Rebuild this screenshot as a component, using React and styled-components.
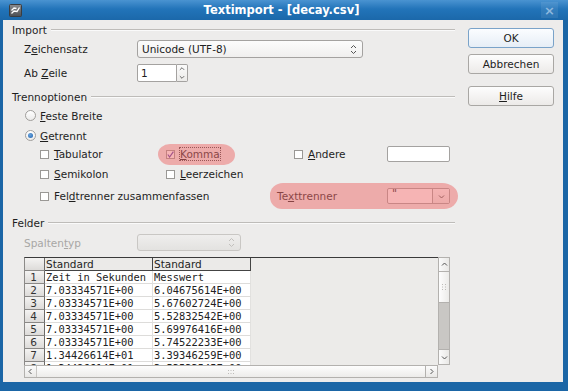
import React from 'react'
import styled, { createGlobalStyle } from 'styled-components'

const GlobalStyle = createGlobalStyle`
  html, body { margin: 0; padding: 0; background: #1b66a6; }
  body {
    font-family: "DejaVu Sans", Verdana, sans-serif;
    font-size: 10px;
    color: #1e1e1e;
  }
`

const Window = styled.div`
  width: 568px;
  height: 391px;
  display: flex;
  flex-direction: column;
  background: #1b66a6;
  overflow: hidden;
  position: relative;
`

const TitleBar = styled.div`
  height: 20px;
  flex: none;
  display: flex;
  align-items: center;
  padding: 0 10px 0 9px;
  background: linear-gradient(#4a93d1, #2274b9 45%, #1b68aa);
`

const Title = styled.div`
  flex: 1;
  text-align: center;
  color: #fff;
  font-weight: bold;
  font-size: 11.5px;
`

const CloseBox = styled.div`
  width: 17px;
  height: 16px;
  display: flex;
  align-items: center;
  justify-content: center;
  background: rgba(255, 255, 255, 0.08);
  color: #8db8de;
  font-size: 13px;
  font-weight: bold;
`

const Client = styled.div`
  flex: 1;
  margin: 0 5px 9px 3px;
  background: #edeceb;
  display: flex;
  padding: 3px 0 0 9px;
`

const Main = styled.div`
  width: 443px;
  display: flex;
  flex-direction: column;
  position: relative;
`

const ButtonColumn = styled.div`
  margin: 5px 0 0 13px;
  width: 86px;
  display: flex;
  flex-direction: column;
`

const Button = styled.div`
  height: 18px;
  margin-top: ${p => p.$mt || 0}px;
  border: 1px solid ${p => (p.$default ? '#7aa3c9' : '#a9a7a4')};
  border-radius: 3px;
  background: ${p => (p.$default ? 'linear-gradient(#fbfdff, #e6eef6)' : 'linear-gradient(#fdfdfd, #eceae8)')};
  display: flex;
  align-items: center;
  justify-content: center;
  font-size: 10.5px;
`

const SectionHead = styled.div`
  height: 13px;
  margin-top: ${p => p.$mt || 0}px;
  display: flex;
  align-items: center;
  gap: 4px;
  font-size: 10.5px;

  &::after {
    content: '';
    flex: 1;
    height: 1px;
    background: #bebcb9;
    box-shadow: 0 1px 0 #fafafa;
  }
`

const Row = styled.div`
  height: ${p => p.$h || 13}px;
  margin-top: ${p => p.$mt || 0}px;
  padding-left: ${p => p.$indent || 0}px;
  display: flex;
  align-items: center;
  font-size: 10.5px;
`

const Cell = styled.div`
  width: ${p => p.$w}px;
  flex: none;
  white-space: nowrap;
  color: ${p => (p.$disabled ? '#a8a7a5' : 'inherit')};
`

const CheckCell = styled.div`
  width: ${p => p.$w}px;
  flex: none;
  display: flex;
  align-items: center;
  white-space: nowrap;
`

const U = styled.span`
  text-decoration: underline;
  text-underline-offset: 1px;
`

const SelectBox = styled.div`
  width: ${p => p.$w}px;
  height: ${p => p.$h || 18}px;
  box-sizing: border-box;
  border: 1px solid ${p => (p.$disabled ? '#c9c7c4' : '#a4a2a0')};
  border-radius: 3px;
  background: ${p => (p.$disabled ? 'linear-gradient(#efeeed, #e3e2e0)' : 'linear-gradient(#fcfcfc, #f0efee)')};
  display: flex;
  align-items: center;
  justify-content: space-between;
  padding: 0 5px 0 4px;
  color: ${p => (p.$disabled ? '#b8b6b3' : '#222')};
`

const SpinWrap = styled.div`
  display: flex;
  height: 18px;
`

const TextInput = styled.div`
  width: ${p => p.$w}px;
  height: ${p => p.$h || 18}px;
  box-sizing: border-box;
  border: 1px solid #a4a2a0;
  border-radius: ${p => p.$radius || '2px'};
  background: #fff;
  display: flex;
  align-items: center;
  padding-left: 3px;
`

const SpinButtons = styled.div`
  width: 11px;
  box-sizing: border-box;
  border: 1px solid #a4a2a0;
  border-left: none;
  border-radius: 0 2px 2px 0;
  background: linear-gradient(#fbfbfb, #ecebe9);
  display: flex;
  flex-direction: column;
  align-items: center;
  justify-content: space-around;
`

const Radio = styled.span`
  width: 11px;
  height: 11px;
  box-sizing: border-box;
  border-radius: 50%;
  border: 1px solid #a09e9b;
  background: linear-gradient(#ffffff, #ecebea);
  margin-right: 4px;
  display: flex;
  align-items: center;
  justify-content: center;

  &::after {
    content: '';
    display: ${p => (p.$on ? 'block' : 'none')};
    width: 5px;
    height: 5px;
    border-radius: 50%;
    background: radial-gradient(circle at 40% 35%, #6ba4dc, #1f63b0);
  }
`

const Check = styled.span`
  width: 9px;
  height: 9px;
  box-sizing: border-box;
  border: 1px solid #9a9895;
  background: #fff;
  margin-right: 5px;
  display: flex;
  align-items: center;
  justify-content: center;
  flex: none;
`

const FocusText = styled.span`
  outline: 1px dotted #444;
  outline-offset: 0;
`

const Highlight = styled.div`
  position: absolute;
  left: ${p => p.$x}px;
  top: ${p => p.$y}px;
  width: ${p => p.$w}px;
  height: ${p => p.$h}px;
  border-radius: ${p => p.$r};
  background: rgba(238, 105, 105, 0.5);
  pointer-events: none;
`

const ComboWrap = styled.div`
  width: 63px;
  height: 16px;
  box-sizing: border-box;
  border: 1px solid #a4a2a0;
  border-radius: 2px;
  background: #fff;
  display: flex;
`

const ComboText = styled.div`
  flex: 1;
  padding: 0 4px;
  line-height: 9px;
  font-size: 11px;
`

const ComboButton = styled.div`
  width: 16px;
  border-left: 1px solid #a4a2a0;
  background: linear-gradient(#fbfbfb, #ecebe9);
  display: flex;
  align-items: center;
  justify-content: center;
`

/* ---------- preview table ---------- */

const Grid = styled.div`
  margin: 6px 0 0 12px;
  width: 426px;
  height: 121px;
  display: grid;
  grid-template-columns: 414px 12px;
  grid-template-rows: 108px 13px;
  background: #ecebe9;
`

const DataArea = styled.div`
  border-top: 1px solid #3a3a3a;
  border-left: 1px solid #8c8a88;
  overflow: hidden;
  background: #ecebe9;
`

const TRow = styled.div`
  display: flex;
  height: 13px;
`

const RowHead = styled.div`
  width: 20px;
  flex: none;
  box-sizing: border-box;
  border-right: 1px solid #6c6a68;
  border-bottom: 1px solid #8a8886;
  background: linear-gradient(#f4f3f2, #dddbd9);
  text-align: center;
  padding-right: 2px;
  font-size: 10.5px;
  line-height: 12px;
  color: #333;
`

const TCell = styled.div`
  width: ${p => p.$w}px;
  flex: none;
  box-sizing: border-box;
  padding-left: 1px;
  white-space: nowrap;
  overflow: hidden;
  line-height: 12px;
  ${p =>
    p.$head
      ? `
    background: #ebeae8;
    border-right: 1px solid #444;
    border-bottom: 1px solid #444;
    font-size: 10.5px;
  `
      : `
    background: #fff;
    border-right: 1px solid #e2e1df;
    border-bottom: 1px solid #dddcda;
    font-family: "DejaVu Sans Mono", monospace;
    font-size: 10.4px;
    color: #222;
  `}
`

const VScroll = styled.div`
  border: 1px solid #b3b1ae;
  display: flex;
  flex-direction: column;
  background: #c9c7c4;
`

const Track = styled.div`
  flex: 1;
`

const ScrollBtn = styled.div`
  flex: none;
  width: ${p => p.$w || 'auto'};
  height: ${p => p.$h || 'auto'};
  background: linear-gradient(${p => (p.$horiz ? '#fbfbfb, #e9e8e6' : '90deg, #fbfbfb, #e9e8e6')});
  border-top: ${p => (p.$sep ? '1px solid #b3b1ae' : 'none')};
  display: flex;
  align-items: center;
  justify-content: center;
`

const VThumb = styled.div`
  height: 30px;
  border-top: 1px solid #b3b1ae;
  border-bottom: 1px solid #b3b1ae;
  background: linear-gradient(90deg, #fdfdfd, #ecebe9);
  display: flex;
  align-items: center;
  justify-content: center;
`

const HScroll = styled.div`
  border: 1px solid #b3b1ae;
  display: flex;
  background: linear-gradient(#fdfdfd, #edecea);
`

const HThumb = styled.div`
  flex: 1;
  border-left: 1px solid #c8c6c3;
  border-right: 1px solid #b3b1ae;
  display: flex;
  align-items: center;
  justify-content: center;
`

const Corner = styled.div`
  background: #edeceb;
`

const Chevron = ({ dir = 'down', size = 7, color = '#555' }) => {
  const paths = {
    down: 'M1 2.5 L3.5 5 L6 2.5',
    up: 'M1 4.5 L3.5 2 L6 4.5',
    left: 'M4.5 1 L2 3.5 L4.5 6',
    right: 'M2.5 1 L5 3.5 L2.5 6',
  }
  return (
    <svg width={size} height={size} viewBox="0 0 7 7">
      <path d={paths[dir]} fill="none" stroke={color} strokeWidth="1" />
    </svg>
  )
}

const UpDown = ({ color = '#555' }) => (
  <svg width="7" height="11" viewBox="0 0 7 11">
    <path d="M1 4 L3.5 1.5 L6 4 M1 7 L3.5 9.5 L6 7" fill="none" stroke={color} strokeWidth="1" />
  </svg>
)

const Grip = ({ vertical }) => (
  <svg width={vertical ? 6 : 8} height={vertical ? 8 : 6} viewBox={vertical ? '0 0 6 8' : '0 0 8 6'}>
    {(vertical
      ? [[1, 1], [4, 1], [1, 3.5], [4, 3.5], [1, 6], [4, 6]]
      : [[1, 1], [3.5, 1], [6, 1], [1, 4], [3.5, 4], [6, 4]]
    ).map(([x, y], i) => (
      <rect key={i} x={x} y={y} width="1" height="1" fill="#bdbbb8" />
    ))}
  </svg>
)

const AppIcon = () => (
  <svg width="13" height="13" viewBox="0 0 13 13">
    <defs>
      <linearGradient id="ic" x1="0" y1="0" x2="0" y2="1">
        <stop offset="0" stopColor="#8a8c90" />
        <stop offset="1" stopColor="#4c4e52" />
      </linearGradient>
    </defs>
    <rect x="0.5" y="0.5" width="12" height="12" rx="1" fill="url(#ic)" stroke="#3b3d40" />
    <path d="M2.5 9.5 L5 7 L8 7.5 L10.5 3.5 M2.5 6.5 L5 4 L7.5 4.5" fill="none" stroke="#fff" strokeWidth="1.3" />
  </svg>
)

const CheckMark = () => (
  <svg width="7" height="7" viewBox="0 0 7 7">
    <path d="M0.8 3.5 L2.6 6 L6.4 0.6" fill="none" stroke="#5b3fa8" strokeWidth="1.2" />
  </svg>
)

const rows = [
  ['1', 'Zeit in Sekunden', 'Messwert'],
  ['2', '7.03334571E+00', '6.04675614E+00'],
  ['3', '7.03334571E+00', '5.67602724E+00'],
  ['4', '7.03334571E+00', '5.52832542E+00'],
  ['5', '7.03334571E+00', '5.69976416E+00'],
  ['6', '7.03334571E+00', '5.74522233E+00'],
  ['7', '1.34426614E+01', '3.39346259E+00'],
  ['8', '1.34426614E+01', '3.53533545E+00'],
]

const CheckItem = ({ w, checked, children }) => (
  <CheckCell $w={w}>
    <Check>{checked && <CheckMark />}</Check>
    <span>{children}</span>
  </CheckCell>
)

export default function App() {
  return (
    <Window>
      <GlobalStyle />
      <TitleBar>
        <AppIcon />
        <Title>Textimport - [decay.csv]</Title>
        <CloseBox>×</CloseBox>
      </TitleBar>

      <Client>
        <Main>
          <SectionHead>Import</SectionHead>
          <Row $h={18} $mt={4} $indent={12}>
            <Cell $w={113}>
              Z<U>e</U>ichensatz
            </Cell>
            <SelectBox $w={226}>
              <span>Unicode (UTF-8)</span>
              <UpDown />
            </SelectBox>
          </Row>
          <Row $h={18} $mt={6} $indent={12}>
            <Cell $w={113}>
              Ab <U>Z</U>eile
            </Cell>
            <SpinWrap>
              <TextInput $w={40} $radius="2px 0 0 2px">1</TextInput>
              <SpinButtons>
                <Chevron dir="up" size={6} />
                <Chevron dir="down" size={6} />
              </SpinButtons>
            </SpinWrap>
          </Row>

          <SectionHead $mt={8}>Trennoptionen</SectionHead>
          <Row $mt={6} $indent={13}>
            <Radio />
            <span>
              <U>F</U>este Breite
            </span>
          </Row>
          <Row $mt={7} $indent={13}>
            <Radio $on />
            <span>
              <U>G</U>etrennt
            </span>
          </Row>
          <Row $h={16} $mt={4} $indent={28}>
            <CheckItem w={126}>
              <U>T</U>abulator
            </CheckItem>
            <CheckItem w={128} checked>
              <FocusText>
                <U>K</U>omma
              </FocusText>
            </CheckItem>
            <CheckItem w={93}>
              <U>A</U>ndere
            </CheckItem>
            <TextInput $w={63} $h={16} />
          </Row>
          <Row $h={16} $mt={4} $indent={28}>
            <CheckItem w={126}>
              <U>S</U>emikolon
            </CheckItem>
            <CheckItem w={128}>
              <U>L</U>eerzeichen
            </CheckItem>
          </Row>
          <Row $h={16} $mt={6} $indent={28}>
            <CheckItem w={237}>
              Fel<U>d</U>trenner zusammenfassen
            </CheckItem>
            <Cell $w={110}>
              Te<U>x</U>ttrenner
            </Cell>
            <ComboWrap>
              <ComboText>"</ComboText>
              <ComboButton>
                <Chevron dir="down" />
              </ComboButton>
            </ComboWrap>
          </Row>

          <SectionHead $mt={12}>Felder</SectionHead>
          <Row $h={17} $mt={5} $indent={12}>
            <Cell $w={113} $disabled>
              Spalten<U>t</U>yp
            </Cell>
            <SelectBox $w={104} $h={17} $disabled>
              <span />
              <UpDown color="#c2c0bd" />
            </SelectBox>
          </Row>

          <Grid>
            <DataArea>
              <TRow>
                <RowHead />
                <TCell $w={108} $head>Standard</TCell>
                <TCell $w={98} $head>Standard</TCell>
              </TRow>
              {rows.map(([n, a, b]) => (
                <TRow key={n}>
                  <RowHead>{n}</RowHead>
                  <TCell $w={108}>{a}</TCell>
                  <TCell $w={98}>{b}</TCell>
                </TRow>
              ))}
            </DataArea>
            <VScroll>
              <ScrollBtn $h="13px">
                <Chevron dir="up" />
              </ScrollBtn>
              <VThumb>
                <Grip vertical />
              </VThumb>
              <Track />
              <ScrollBtn $h="14px" $sep>
                <Chevron dir="down" />
              </ScrollBtn>
            </VScroll>
            <HScroll>
              <ScrollBtn $w="11px" $horiz>
                <Chevron dir="left" />
              </ScrollBtn>
              <HThumb>
                <Grip />
              </HThumb>
              <ScrollBtn $w="11px" $horiz>
                <Chevron dir="right" />
              </ScrollBtn>
            </HScroll>
            <Corner />
          </Grid>

          <Highlight $x={146} $y={121} $w={77} $h={21} $r="12px 14px 11px 12px / 10px 11px 10px 11px" />
          <Highlight $x={258} $y={160} $w={188} $h={26} $r="13px 16px 14px 12px / 12px 13px 13px 12px" />
        </Main>

        <ButtonColumn>
          <Button $default>OK</Button>
          <Button $mt={6}>Abbrechen</Button>
          <Button $mt={12}>
            <U>H</U>ilfe
          </Button>
        </ButtonColumn>
      </Client>
    </Window>
  )
}
